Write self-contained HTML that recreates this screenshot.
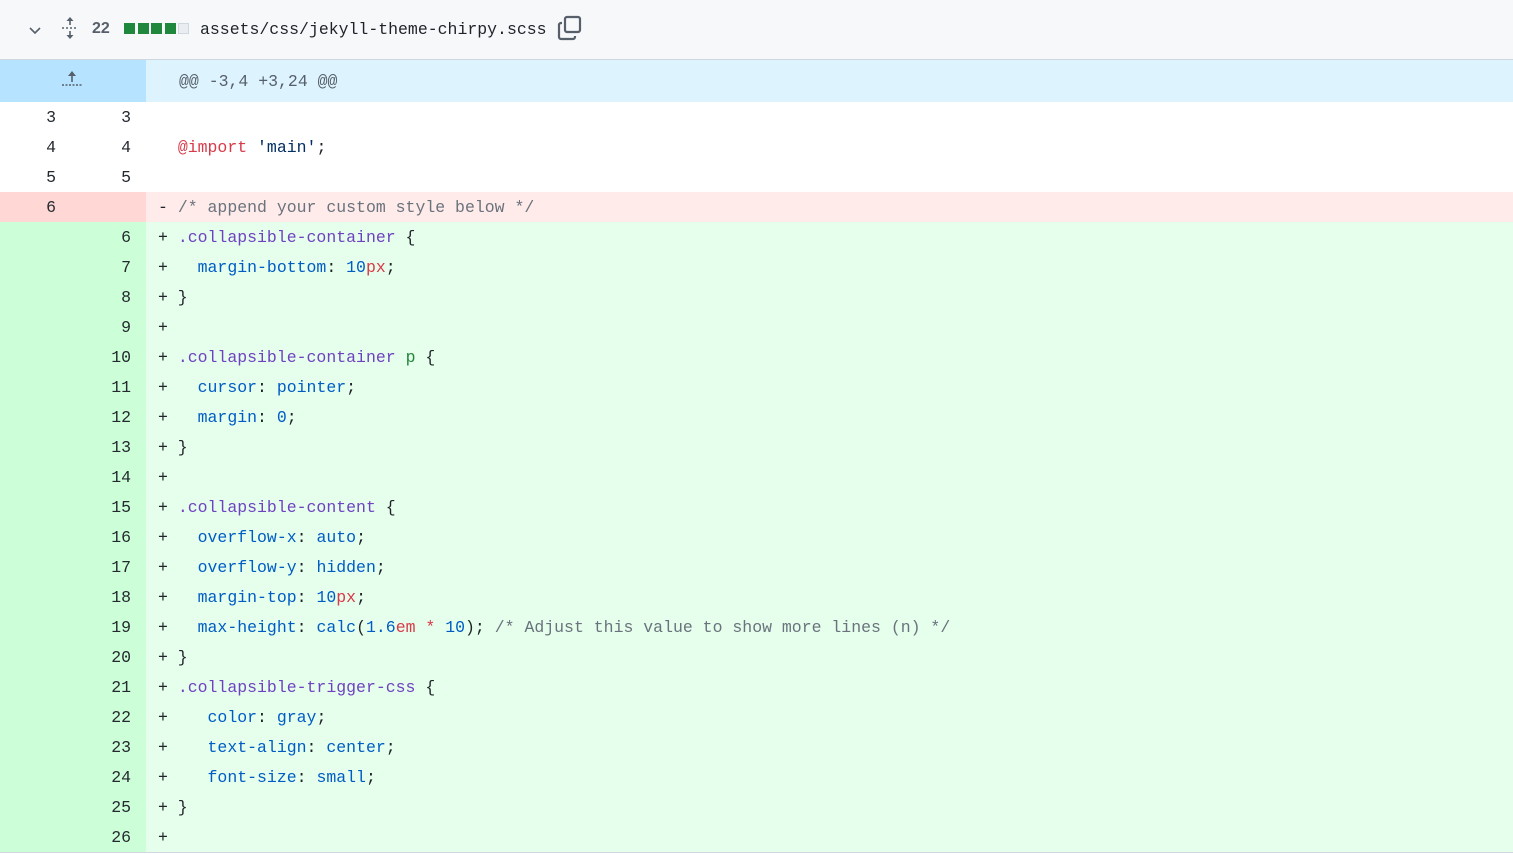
<!DOCTYPE html>
<html><head><meta charset="utf-8"><style>
*{margin:0;padding:0;box-sizing:border-box}
body{width:1513px;height:855px;background:#fff;overflow:hidden;font-family:"Liberation Mono",monospace}
.hdr{position:absolute;left:0;top:0;width:1513px;height:60px;background:#f6f8fa;border-bottom:1px solid #d0d7de}
.hunk{position:absolute;left:0;top:60px;width:1513px;height:42px;background:#ddf4ff}
.hunk .g{position:absolute;left:0;top:0;width:146px;height:42px;background:#b6e3ff}
.hunk .t{position:absolute;left:179px;top:1px;line-height:42px;font-size:16.5px;color:#57606a}
.row{position:absolute;left:0;width:1513px;height:30px;font-size:16.5px;line-height:32px;color:#1f2328;white-space:pre}
.row .l,.row .r{position:absolute;top:0;width:73px;height:30px;text-align:right;color:#24292f}
.row .l{left:0;padding-right:17px}
.row .r{left:73px;padding-right:15px}
.row .c{position:absolute;left:158px;top:0}
.add{background:#e6ffec}.add .l,.add .r{background:#ccffd8}
.del{background:#ffebe9}.del .l,.del .r{background:#ffd7d5}
.s{color:#6f42c1}.p{color:#005cc5}.k{color:#d73a49}.st{color:#032f62}.cm{color:#6a737d}
.bot{position:absolute;left:0;top:852px;width:1513px;height:1px;background:#d0d7de}
</style></head><body>
<div class="hdr">
<svg style="position:absolute;left:27px;top:22px" width="16" height="16" viewBox="0 0 16 16"><path d="M3 6l5 5 5-5" fill="none" stroke="#57606a" stroke-width="1.6"/></svg>
<svg style="position:absolute;left:61px;top:16px" width="18" height="24" viewBox="0 0 18 24"><path d="M9 1l-3.5 4h7z M9 23l-3.5-4h7z" fill="#57606a"/><path d="M9 4v5 M9 15v5" stroke="#57606a" stroke-width="1.6"/><path d="M1 12h16" stroke="#57606a" stroke-width="1.4" stroke-dasharray="2 2"/></svg>
<div style="position:absolute;left:92px;top:20px;font:bold 16px 'Liberation Sans',sans-serif;color:#57606a">22</div>
<div style="position:absolute;left:124px;top:23px;width:11px;height:11px;background:#1f883d"></div>
<div style="position:absolute;left:138px;top:23px;width:11px;height:11px;background:#1f883d"></div>
<div style="position:absolute;left:151px;top:23px;width:11px;height:11px;background:#1f883d"></div>
<div style="position:absolute;left:165px;top:23px;width:11px;height:11px;background:#1f883d"></div>
<div style="position:absolute;left:178px;top:23px;width:11px;height:11px;background:#eaeef2;border:1px solid #d0d7de"></div>
<div style="position:absolute;left:200px;top:18px;font-size:16.5px;line-height:24px;color:#1f2328">assets/css/jekyll-theme-chirpy.scss</div>
<svg style="position:absolute;left:557px;top:15px" width="26" height="26" viewBox="0 0 26 26"><rect x="8" y="2" width="15" height="15" rx="2" fill="none" stroke="#57606a" stroke-width="2.2"/><path d="M5 8h-1a2 2 0 0 0-2 2v12a2 2 0 0 0 2 2h12a2 2 0 0 0 2-2v-1" fill="none" stroke="#57606a" stroke-width="2.2"/></svg>
</div>
<div class="hunk"><div class="g"><svg style="position:absolute;left:60px;top:10px" width="24" height="20" viewBox="0 0 24 20"><path d="M12 1l-4 5h8z" fill="#57606a"/><path d="M12 5v7" stroke="#57606a" stroke-width="1.6"/><path d="M2 15h20" stroke="#57606a" stroke-width="1.5" stroke-dasharray="2 1.5"/></svg></div><div class="t">@@ -3,4 +3,24 @@</div></div>

<div class="row" style="top:102px"><span class="l">3</span><span class="r">3</span><span class="c">  </span></div>
<div class="row" style="top:132px"><span class="l">4</span><span class="r">4</span><span class="c">  <span class="k">@import</span> <span class="st">'main'</span>;</span></div>
<div class="row" style="top:162px"><span class="l">5</span><span class="r">5</span><span class="c"></span></div>
<div class="row del" style="top:192px"><span class="l">6</span><span class="r"></span><span class="c">- <span class="cm">/* append your custom style below */</span></span></div>
<div class="row add" style="top:222px"><span class="l"></span><span class="r">6</span><span class="c">+ <span class="s">.collapsible-container</span> {</span></div>
<div class="row add" style="top:252px"><span class="l"></span><span class="r">7</span><span class="c">+   <span class="p">margin-bottom</span>: <span class="p">10</span><span class="k">px</span>;</span></div>
<div class="row add" style="top:282px"><span class="l"></span><span class="r">8</span><span class="c">+ }</span></div>
<div class="row add" style="top:312px"><span class="l"></span><span class="r">9</span><span class="c">+</span></div>
<div class="row add" style="top:342px"><span class="l"></span><span class="r">10</span><span class="c">+ <span class="s">.collapsible-container</span> <span style="color:#22863a">p</span> {</span></div>
<div class="row add" style="top:372px"><span class="l"></span><span class="r">11</span><span class="c">+   <span class="p">cursor</span>: <span class="p">pointer</span>;</span></div>
<div class="row add" style="top:402px"><span class="l"></span><span class="r">12</span><span class="c">+   <span class="p">margin</span>: <span class="p">0</span>;</span></div>
<div class="row add" style="top:432px"><span class="l"></span><span class="r">13</span><span class="c">+ }</span></div>
<div class="row add" style="top:462px"><span class="l"></span><span class="r">14</span><span class="c">+</span></div>
<div class="row add" style="top:492px"><span class="l"></span><span class="r">15</span><span class="c">+ <span class="s">.collapsible-content</span> {</span></div>
<div class="row add" style="top:522px"><span class="l"></span><span class="r">16</span><span class="c">+   <span class="p">overflow-x</span>: <span class="p">auto</span>;</span></div>
<div class="row add" style="top:552px"><span class="l"></span><span class="r">17</span><span class="c">+   <span class="p">overflow-y</span>: <span class="p">hidden</span>;</span></div>
<div class="row add" style="top:582px"><span class="l"></span><span class="r">18</span><span class="c">+   <span class="p">margin-top</span>: <span class="p">10</span><span class="k">px</span>;</span></div>
<div class="row add" style="top:612px"><span class="l"></span><span class="r">19</span><span class="c">+   <span class="p">max-height</span>: <span class="p">calc</span>(<span class="p">1.6</span><span class="k">em</span> <span class="k">*</span> <span class="p">10</span>); <span class="cm">/* Adjust this value to show more lines (n) */</span></span></div>
<div class="row add" style="top:642px"><span class="l"></span><span class="r">20</span><span class="c">+ }</span></div>
<div class="row add" style="top:672px"><span class="l"></span><span class="r">21</span><span class="c">+ <span class="s">.collapsible-trigger-css</span> {</span></div>
<div class="row add" style="top:702px"><span class="l"></span><span class="r">22</span><span class="c">+    <span class="p">color</span>: <span class="p">gray</span>;</span></div>
<div class="row add" style="top:732px"><span class="l"></span><span class="r">23</span><span class="c">+    <span class="p">text-align</span>: <span class="p">center</span>;</span></div>
<div class="row add" style="top:762px"><span class="l"></span><span class="r">24</span><span class="c">+    <span class="p">font-size</span>: <span class="p">small</span>;</span></div>
<div class="row add" style="top:792px"><span class="l"></span><span class="r">25</span><span class="c">+ }</span></div>
<div class="row add" style="top:822px"><span class="l"></span><span class="r">26</span><span class="c">+</span></div>
<div class="bot"></div>
</body></html>
